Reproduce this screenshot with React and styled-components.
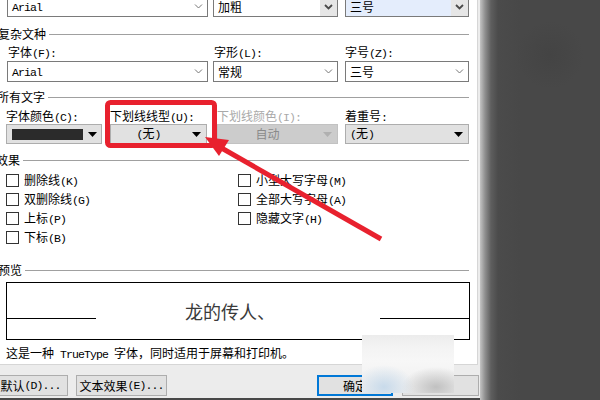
import React from 'react';
import styled, { createGlobalStyle } from 'styled-components';

const Global = createGlobalStyle`
  html, body { margin: 0; padding: 0; }
  body {
    width: 600px; height: 400px; overflow: hidden; background: #484848;
    font-family: "Noto Sans CJK SC", "Noto Sans", sans-serif;
    font-size: 12px; color: #000;
  }
`;

const Screen = styled.div`
  position: relative;
  width: 600px;
  height: 400px;
  display: flex;
  overflow: hidden;
  background: #484848;
`;

const Dialog = styled.div`
  width: 480px;
  height: 398px;
  flex: none;
  background: #ececec;
  display: flex;
  flex-direction: column;
`;

const Page = styled.div`
  width: 478px;
  height: 365px;
  box-sizing: border-box;
  background: #fff;
  border-right: 1px solid #d6d6d6;
  border-bottom: 1px solid #d6d6d6;
  padding-right: 8px;
  display: flex;
  flex-direction: column;
`;

const Shade = styled.div`
  flex: 1;
  background:
    radial-gradient(circle at 70px 55px, rgba(58, 58, 58, 0.3) 0, rgba(58, 58, 58, 0) 34px),
    linear-gradient(to right, #c4c4c4 0, #8f8f8f 5px, #5e5e5e 11px, #4b4b4b 18px, #484848 40px);
`;

const Half = styled.span`
  font-family: "Liberation Mono", monospace;
  font-size: 11.5px;
  letter-spacing: -0.9px;
`;

function T({ children }) {
  const parts = String(children).split(/([\x20-\x7e]+)/);
  return parts.map((p, i) => (i % 2 ? <Half key={i}>{p}</Half> : p));
}

const ComboRow = styled.div`
  display: flex;
  padding-left: ${(p) => p.$pl}px;
  margin-top: ${(p) => p.$mt}px;
`;

const FieldRow = styled.div`
  display: flex;
  padding-left: ${(p) => p.$pl}px;
  margin-top: ${(p) => p.$mt}px;
`;

const Field = styled.div`
  display: flex;
  flex-direction: column;
  width: ${(p) => p.$w}px;
  margin-right: ${(p) => p.$mr || 0}px;
  gap: ${(p) => p.$gap}px;
`;

const Label = styled.div`
  height: 14px;
  line-height: 14px;
  white-space: nowrap;
  padding-left: ${(p) => p.$pl || 0}px;
  color: ${(p) => (p.$disabled ? '#a9a9a9' : '#000')};
`;

const Combo = styled.div`
  box-sizing: border-box;
  width: ${(p) => p.$w}px;
  height: ${(p) => p.$h}px;
  margin-right: ${(p) => p.$mr || 0}px;
  border: 1px solid #7a7a7a;
  background: ${(p) => (p.$focus ? '#e4edfc' : '#fff')};
  display: flex;
  align-items: center;
  flex: none;
`;

const ComboText = styled.span`
  flex: 1;
  padding-left: 4px;
  line-height: 16px;
  white-space: nowrap;
`;

const ComboBtn = styled.span`
  width: 17px;
  align-self: stretch;
  display: flex;
  align-items: center;
  justify-content: center;
  background: ${(p) => (p.$hot ? '#e6e6e6' : 'transparent')};
`;

const Picker = styled.div`
  box-sizing: border-box;
  height: 20px;
  border: 1px solid ${(p) => (p.$disabled ? '#c2c2c2' : '#adadad')};
  background: ${(p) => (p.$disabled ? '#cccccc' : '#e1e1e1')};
  color: ${(p) => (p.$disabled ? '#8a8a8a' : '#000')};
  display: flex;
  align-items: center;
`;

const PickerText = styled.span`
  flex: 1;
  line-height: 16px;
  white-space: nowrap;
  text-align: ${(p) => (p.$left ? 'left' : 'center')};
  padding-left: ${(p) => (p.$left ? 4 : 0)}px;
`;

const Swatch = styled.span`
  flex: none;
  width: 71px;
  height: 11px;
  margin-left: 5px;
  background: #2b2b2b;
`;

const Spacer = styled.span`
  flex: 1;
`;

const PickerBtn = styled.span`
  width: 20px;
  display: flex;
  align-items: center;
  justify-content: center;
`;

const GroupHeader = styled.div`
  display: flex;
  align-items: center;
  height: 14px;
  gap: 3px;
  margin-top: ${(p) => p.$mt}px;
  margin-left: ${(p) => p.$ml}px;
`;

const GroupTitle = styled.span`
  line-height: 14px;
  white-space: nowrap;
`;

const GroupLine = styled.div`
  flex: 1;
  height: 1px;
  background: #a0a0a0;
`;

const Checks = styled.div`
  display: flex;
  padding-left: 6px;
  margin-top: 4px;
`;

const CheckCol = styled.div`
  display: flex;
  flex-direction: column;
  width: ${(p) => (p.$w ? `${p.$w}px` : 'auto')};
`;

const CheckRow = styled.div`
  display: flex;
  align-items: center;
  height: 19px;
  gap: 5px;
  line-height: 14px;
  white-space: nowrap;
`;

const Box = styled.span`
  width: 13px;
  height: 13px;
  box-sizing: border-box;
  border: 1px solid #333;
  background: #fff;
  flex: none;
`;

const Preview = styled.div`
  margin: 5px 0 0 6px;
  width: 464px;
  height: 58px;
  box-sizing: border-box;
  border: 1px solid #000;
  display: flex;
`;

const Rule = styled.div`
  width: 89px;
  height: 1px;
  background: #000;
  margin-top: 35px;
  margin-left: ${(p) => (p.$auto ? 'auto' : '0')};
`;

const Sample = styled.div`
  margin-left: 89px;
  margin-top: 16px;
  font-size: 18px;
  line-height: 24px;
  height: 24px;
  color: #3a3a3a;
  white-space: nowrap;
`;

const Desc = styled.div`
  margin: 6px 0 0 6px;
  line-height: 14px;
  white-space: nowrap;
`;

const ButtonBar = styled.div`
  display: flex;
  padding-top: 10px;
`;

const Button = styled.div`
  box-sizing: border-box;
  flex: none;
  width: ${(p) => p.$w}px;
  height: 21px;
  margin-left: ${(p) => p.$ml}px;
  border: ${(p) => (p.$primary ? '2px solid #0078d7' : '1px solid #adadad')};
  background: #e1e1e1;
  display: flex;
  align-items: center;
  justify-content: center;
  line-height: 14px;
  white-space: nowrap;
`;

const BlurPatch = styled.div`
  position: absolute;
  left: 362px;
  top: 335px;
  width: 92px;
  height: 58px;
  background:
    radial-gradient(ellipse 30px 22px at 22px 52px, rgba(196, 216, 234, 0.9) 0, rgba(196, 216, 234, 0) 100%),
    radial-gradient(ellipse 34px 20px at 74px 52px, rgba(190, 190, 190, 0.95) 0, rgba(190, 190, 190, 0) 100%),
    linear-gradient(#ececec 0, #f3f3f3 20%, #f7f7f7 45%, #eeeeee 100%);
`;

const Annotation = styled.svg`
  position: absolute;
  left: 0;
  top: 0;
  pointer-events: none;
`;

const Chevron = ({ bold }) =>
  bold ? (
    <svg width="9" height="6" viewBox="0 0 9 6">
      <path d="M1 1 L4.5 4.5 L8 1" stroke="#4a4a4a" strokeWidth="1.8" fill="none" />
    </svg>
  ) : (
    <svg width="9" height="5" viewBox="0 0 9 5">
      <path d="M1 0.5 L4.5 4 L8 0.5" stroke="#777" strokeWidth="1" fill="none" />
    </svg>
  );

const Tri = ({ disabled }) => (
  <svg width="9" height="5" viewBox="0 0 9 5">
    <polygon points="0,0 9,0 4.5,5" fill={disabled ? '#b0b0b0' : '#000'} />
  </svg>
);

const Check = ({ label }) => (
  <CheckRow>
    <Box />
    <span>
      <T>{label}</T>
    </span>
  </CheckRow>
);

export default function App() {
  return (
    <>
      <Global />
      <Screen>
        <Dialog>
          <Page>
            <ComboRow $pl={7} $mt={-4}>
              <Combo $w={201} $h={21} $mr={5}>
                <ComboText>
                  <T>Arial</T>
                </ComboText>
                <ComboBtn>
                  <Chevron />
                </ComboBtn>
              </Combo>
              <Combo $w={125} $h={21} $mr={7}>
                <ComboText>加粗</ComboText>
                <ComboBtn $hot>
                  <Chevron bold />
                </ComboBtn>
              </Combo>
              <Combo $w={124} $h={21} $focus>
                <ComboText>三号</ComboText>
                <ComboBtn $hot>
                  <Chevron bold />
                </ComboBtn>
              </Combo>
            </ComboRow>

            <GroupHeader $mt={10} $ml={-2}>
              <GroupTitle>复杂文种</GroupTitle>
              <GroupLine />
            </GroupHeader>

            <FieldRow $pl={7} $mt={4}>
              <Field $w={201} $mr={5} $gap={2}>
                <Label $pl={1}>
                  <T>字体(F):</T>
                </Label>
                <Combo $w={201} $h={21}>
                  <ComboText>
                    <T>Arial</T>
                  </ComboText>
                  <ComboBtn>
                    <Chevron />
                  </ComboBtn>
                </Combo>
              </Field>
              <Field $w={125} $mr={7} $gap={2}>
                <Label $pl={1}>
                  <T>字形(L):</T>
                </Label>
                <Combo $w={125} $h={21}>
                  <ComboText>常规</ComboText>
                  <ComboBtn>
                    <Chevron />
                  </ComboBtn>
                </Combo>
              </Field>
              <Field $w={124} $gap={2}>
                <Label>
                  <T>字号(Z):</T>
                </Label>
                <Combo $w={124} $h={21}>
                  <ComboText>三号</ComboText>
                  <ComboBtn>
                    <Chevron />
                  </ComboBtn>
                </Combo>
              </Field>
            </FieldRow>

            <GroupHeader $mt={8} $ml={-3}>
              <GroupTitle>所有文字</GroupTitle>
              <GroupLine />
            </GroupHeader>

            <FieldRow $pl={6} $mt={5}>
              <Field $w={96} $mr={8} $gap={1}>
                <Label>
                  <T>字体颜色(C):</T>
                </Label>
                <Picker>
                  <Swatch />
                  <Spacer />
                  <PickerBtn>
                    <Tri />
                  </PickerBtn>
                </Picker>
              </Field>
              <Field $w={97} $mr={10} $gap={1}>
                <Label>
                  <T>下划线线型(U):</T>
                </Label>
                <Picker>
                  <PickerText>
                    <T>(无)</T>
                  </PickerText>
                  <PickerBtn>
                    <Tri />
                  </PickerBtn>
                </Picker>
              </Field>
              <Field $w={121} $mr={7} $gap={1}>
                <Label $disabled>
                  <T>下划线颜色(I):</T>
                </Label>
                <Picker $disabled>
                  <PickerText>自动</PickerText>
                  <PickerBtn>
                    <Tri disabled />
                  </PickerBtn>
                </Picker>
              </Field>
              <Field $w={124} $gap={1}>
                <Label>
                  <T>着重号:</T>
                </Label>
                <Picker>
                  <PickerText $left>
                    <T>(无)</T>
                  </PickerText>
                  <PickerBtn>
                    <Tri />
                  </PickerBtn>
                </Picker>
              </Field>
            </FieldRow>

            <GroupHeader $mt={9} $ml={-4}>
              <GroupTitle>效果</GroupTitle>
              <GroupLine />
            </GroupHeader>

            <Checks>
              <CheckCol $w={232}>
                <Check label="删除线(K)" />
                <Check label="双删除线(G)" />
                <Check label="上标(P)" />
                <Check label="下标(B)" />
              </CheckCol>
              <CheckCol>
                <Check label="小型大写字母(M)" />
                <Check label="全部大写字母(A)" />
                <Check label="隐藏文字(H)" />
              </CheckCol>
            </Checks>

            <GroupHeader $mt={16} $ml={-2}>
              <GroupTitle>预览</GroupTitle>
              <GroupLine />
            </GroupHeader>

            <Preview>
              <Rule />
              <Sample>龙的传人、</Sample>
              <Rule $auto />
            </Preview>

            <Desc>
              <T>这是一种 TrueType 字体，同时适用于屏幕和打印机。</T>
            </Desc>
          </Page>

          <ButtonBar>
            <Button $w={75} $ml={-7}>
              <T>默认(D)...</T>
            </Button>
            <Button $w={91} $ml={8}>
              <T>文本效果(E)...</T>
            </Button>
            <Button $w={76} $ml={150} $primary>
              确定
            </Button>
            <Button $w={77} $ml={9}>
              取消
            </Button>
          </ButtonBar>
        </Dialog>
        <Shade />

        <BlurPatch />

        <Annotation width="600" height="400" viewBox="0 0 600 400">
          <rect x="107.5" y="102.5" width="107" height="43" rx="3" fill="none" stroke="#e8212e" strokeWidth="5" />
          <line x1="381" y1="239" x2="218" y2="146" stroke="#e8212e" strokeWidth="5" />
          <polygon points="205,137 229,140 219,156" fill="#e8212e" />
        </Annotation>
      </Screen>
    </>
  );
}
